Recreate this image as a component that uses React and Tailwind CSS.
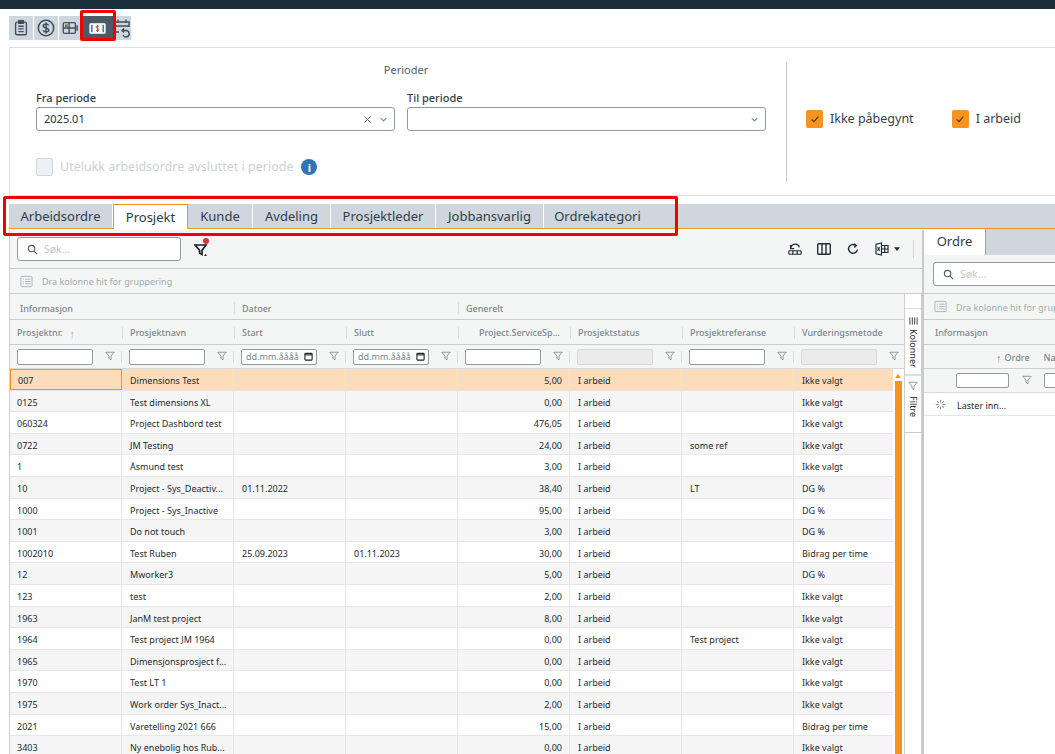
import React from 'react'

const FONT = "font-['Open_Sans','Noto_Sans',sans-serif]"

const rows = [
    ['007', 'Dimensions Test', '', '', '5,00', 'I arbeid', '', 'Ikke valgt'],
    ['0125', 'Test dimensions XL', '', '', '0,00', 'I arbeid', '', 'Ikke valgt'],
    ['060324', 'Project Dashbord test', '', '', '476,05', 'I arbeid', '', 'Ikke valgt'],
    ['0722', 'JM Testing', '', '', '24,00', 'I arbeid', 'some ref', 'Ikke valgt'],
    ['1', 'Åsmund test', '', '', '3,00', 'I arbeid', '', 'Ikke valgt'],
    ['10', 'Project - Sys_Deactiv...', '01.11.2022', '', '38,40', 'I arbeid', 'LT', 'DG %'],
    ['1000', 'Project - Sys_Inactive', '', '', '95,00', 'I arbeid', '', 'DG %'],
    ['1001', 'Do not touch', '', '', '3,00', 'I arbeid', '', 'DG %'],
    ['1002010', 'Test Ruben', '25.09.2023', '01.11.2023', '30,00', 'I arbeid', '', 'Bidrag per time'],
    ['12', 'Mworker3', '', '', '5,00', 'I arbeid', '', 'DG %'],
    ['123', 'test', '', '', '2,00', 'I arbeid', '', 'Ikke valgt'],
    ['1963', 'JanM test project', '', '', '8,00', 'I arbeid', '', 'Ikke valgt'],
    ['1964', 'Test project JM 1964', '', '', '0,00', 'I arbeid', 'Test project', 'Ikke valgt'],
    ['1965', 'Dimensjonsprosject f...', '', '', '0,00', 'I arbeid', '', 'Ikke valgt'],
    ['1970', 'Test LT 1', '', '', '0,00', 'I arbeid', '', 'Ikke valgt'],
    ['1975', 'Work order Sys_Inact...', '', '', '2,00', 'I arbeid', '', 'Ikke valgt'],
    ['2021', 'Varetelling 2021 666', '', '', '15,00', 'I arbeid', '', 'Bidrag per time'],
    ['3403', 'Ny enebolig hos Rub...', '', '', '0,00', 'I arbeid', '', 'Ikke valgt'],
]

const columns = ['Prosjektnr.', 'Prosjektnavn', 'Start', 'Slutt', 'Project.ServiceSp...', 'Prosjektstatus', 'Prosjektreferanse', 'Vurderingsmetode']
const filters = ['text', 'text', 'date', 'date', 'text', 'off', 'text', 'off']
const tabs = ['Arbeidsordre', 'Prosjekt', 'Kunde', 'Avdeling', 'Prosjektleder', 'Jobbansvarlig', 'Ordrekategori']
const tabWidths = ['w-[104px]', 'w-[75px]', 'w-[65px]', 'w-[78px]', 'w-[105px]', 'w-[108px]', 'w-[107px]']

const FunnelIcon = ({ className = 'w-[10px] h-[10px]' }) => (
    <svg viewBox="0 0 12 12" className={className} fill="none" stroke="#7d8a8c" strokeWidth="1">
        <path d="M1 1.5h10L7.2 6v4.5L4.8 9V6z" />
    </svg>
)

const GroupIcon = () => (
    <svg viewBox="0 0 14 14" className="w-[13px] h-[13px] shrink-0" fill="none" stroke="#a9b3b5" strokeWidth="1">
        <rect x="1" y="1.5" width="12" height="11" rx="1" />
        <path d="M3 4.5h1M5.5 4.5h6M3 7h1M5.5 7h6M3 9.5h1M5.5 9.5h6" />
    </svg>
)

const SearchBox = ({ className }) => (
    <div className={`flex items-center gap-[6px] pl-[9px] h-[24px] bg-white border border-[#8e9ba3] rounded-[3px] ${className}`}>
        <svg viewBox="0 0 12 12" className="w-[11px] h-[11px]" fill="none" stroke="#4c5a63" strokeWidth="1.2">
            <circle cx="5" cy="5" r="3.5" />
            <path d="M7.7 7.7L11 11" />
        </svg>
        <span className="text-[10.5px] text-[#c3c9cc] pt-px">Søk...</span>
    </div>
)

const Check = () => (
    <span className="flex items-center justify-center w-[17px] h-[18px] bg-[#f7931e] rounded-[2px]">
        <svg viewBox="0 0 12 12" className="w-[10px] h-[10px]" fill="none" stroke="#4a3320" strokeWidth="1.4">
            <path d="M2 6.5l2.8 2.6L10 3.2" />
        </svg>
    </span>
)

const Chevron = () => (
    <svg viewBox="0 0 10 10" className="w-[9px] h-[9px]" fill="none" stroke="#7f8c94" strokeWidth="1.3">
        <path d="M2 3.5l3 3 3-3" />
    </svg>
)

const TopIcons = () => (
    <div className="flex h-[31px] pl-[9px] items-end">
        <div className="flex items-center justify-center w-[24px] h-[24px] bg-[#cfd6dd] mr-px">
            <svg viewBox="0 0 20 20" className="w-[18px] h-[18px]" fill="none" stroke="#3d4f5c" strokeWidth="1.5">
                <rect x="4" y="3.5" width="12" height="14" rx="1.5" />
                <rect x="7.5" y="1.8" width="5" height="3" fill="#3d4f5c" />
                <path d="M7 8h6M7 11h6M7 14h6" />
            </svg>
        </div>
        <div className="flex items-center justify-center w-[24px] h-[24px] bg-[#cfd6dd] mr-px">
            <svg viewBox="0 0 20 20" className="w-[20px] h-[20px]" fill="none" stroke="#3d4f5c" strokeWidth="1.5">
                <circle cx="10" cy="10" r="7.7" />
                <path d="M12.6 7.4C12.2 6.3 11.2 5.9 10 5.9c-1.5 0-2.7.8-2.7 2 0 2.8 5.4 1.3 5.4 4.2 0 1.2-1.2 2-2.7 2-1.3 0-2.4-.6-2.8-1.8M10 4.4v11.2" />
            </svg>
        </div>
        <div className="flex items-center justify-center w-[21px] h-[24px] bg-[#cfd6dd] mr-[1px]">
            <svg viewBox="0 0 20 20" className="w-[18px] h-[18px]" fill="none" stroke="#3d4f5c" strokeWidth="1.5">
                <rect x="2.5" y="4" width="13.5" height="12" rx="1.5" />
                <path d="M9 4v12M2.5 10H16M18 7v6" />
                <rect x="4.5" y="6" width="3" height="3" fill="#8a6b4a" stroke="none" />
            </svg>
        </div>
        <div className="flex items-center justify-center w-[33px] h-[24px] bg-[#4a5a66]">
            <svg viewBox="0 0 18 12" className="w-[17px] h-[11px]">
                <rect x="0.5" y="0.5" width="17" height="11" rx="1" fill="#f7f8f9" stroke="#dfe4e7" />
                <rect x="2" y="2" width="1.6" height="8" fill="#4f6f96" />
                <rect x="14.4" y="2" width="1.6" height="8" fill="#4f6f96" />
                <path d="M10.6 3.6C9.6 3 7.5 3.2 7.5 4.5c0 1.7 3.1 1.1 3.1 2.8 0 1.2-2.1 1.4-3.1.8M9 2.2v7.6" fill="none" stroke="#c24a3a" strokeWidth="1" />
            </svg>
        </div>
        <div className="flex items-center justify-center w-[17px] h-[24px] bg-[#cfd6dd]">
            <svg viewBox="0 0 17 22" className="w-[17px] h-[22px]" fill="none" stroke="#3d4f5c" strokeWidth="1.4">
                <path d="M1 5h14v5M1 5v10h4M1 9h14M4 2.5v3.5M12 2.5v3.5" />
                <path d="M8 13.5h4a3.2 3.2 0 1 1-3 4.5M10 11.5l-2 2 2 2" />
            </svg>
        </div>
    </div>
)

const FilterPanel = () => (
    <div className="mt-[7px] ml-[9px] h-[149px] border-t border-l border-b border-[#dedede] bg-white flex">
        <div className="w-[776px] shrink-0 pt-[14px] pl-[26px] pr-[10px] flex flex-col">
            <div className="text-center text-[11px] leading-[16px] text-[#57606a]">Perioder</div>
            <div className="flex gap-[12px] mt-[12px]">
                <div className="w-[359px] shrink-0">
                    <div className="text-[11px] leading-[16px] font-medium text-[#33414b] mb-[1px]">Fra periode</div>
                    <div className="h-[24px] bg-white border border-[#8e9ba3] rounded-[3px] flex items-center pl-[7px] pr-[6px]">
                        <span className="flex-1 text-[11px] text-[#2d3940]">2025.01</span>
                        <svg viewBox="0 0 10 10" className="w-[9px] h-[9px] mr-[7px]" fill="none" stroke="#5f6b73" strokeWidth="1">
                            <path d="M1.5 1.5l7 7M8.5 1.5l-7 7" />
                        </svg>
                        <Chevron />
                    </div>
                </div>
                <div className="w-[359px] shrink-0">
                    <div className="text-[11px] leading-[16px] font-medium text-[#33414b] mb-[1px]">Til periode</div>
                    <div className="h-[24px] bg-white border border-[#8e9ba3] rounded-[3px] flex items-center justify-end pr-[6px]">
                        <Chevron />
                    </div>
                </div>
            </div>
            <div className="flex items-center mt-[27px]">
                <span className="w-[17px] h-[18px] bg-[#eef1f3] border border-[#cfd6dd] rounded-[2px]" />
                <span className="ml-[7px] text-[12.5px] text-[#ccd1d4]">Utelukk arbeidsordre avsluttet i periode</span>
                <span className="ml-[8px] flex items-center justify-center w-[16px] h-[16px] rounded-full bg-[#2f75b5] text-white text-[11px] font-bold leading-none">i</span>
            </div>
        </div>
        <div className="w-px h-[120px] mt-[14px] bg-[#c9c9c9]" />
        <div className="flex items-start pt-[62px] pl-[19px]">
            <Check />
            <span className="ml-[7px] text-[12.5px] leading-[18px] text-[#33414b]">Ikke påbegynt</span>
            <span className="ml-[38px]"><Check /></span>
            <span className="ml-[7px] text-[12.5px] leading-[18px] text-[#33414b]">I arbeid</span>
        </div>
    </div>
)

const TabStrip = () => (
    <div className="mt-[8px] ml-[9px] h-[25px] bg-[#cfd6dd] border-b border-[#f7931e] flex">
        {tabs.map((t, i) => (
            <div
                key={t}
                className={`${tabWidths[i]} shrink-0 flex items-center justify-center pt-px text-[13px] ${i === 1
                    ? 'bg-white border-t border-l border-r border-[#f7931e] text-[#2d3940] h-[25px]'
                    : `text-[#2f3e48] ${i < 6 ? 'border-r border-white' : ''}`}`}
            >
                {t}
            </div>
        ))}
    </div>
)

const ColFilter = ({ type }) => {
    let box
    if (type === 'date') {
        box = (
            <div className="w-[76px] h-[16px] shrink-0 bg-white border border-[#8e9ba3] rounded-[2px] flex items-center pl-[4px] pr-[3px] justify-between">
                <span className="text-[9px] text-[#7a858b]">dd.mm.åååå</span>
                <svg viewBox="0 0 10 10" className="w-[9px] h-[9px]" fill="none" stroke="#222" strokeWidth="1.2">
                    <rect x="1" y="1.5" width="8" height="7.5" rx="0.8" />
                    <path d="M1 3.2h8" />
                </svg>
            </div>
        )
    } else if (type === 'off') {
        box = <div className="w-[76px] h-[16px] shrink-0 bg-[#ebebeb] border border-[#d5d9db] rounded-[2px]" />
    } else {
        box = <div className="w-[76px] h-[16px] shrink-0 bg-white border border-[#8e9ba3] rounded-[2px]" />
    }
    return (
        <div className="w-[112px] shrink-0 h-full flex items-center pl-[7px]">
            {box}
            <span className="ml-[12px] -mt-[2px]"><FunnelIcon /></span>
            <span className="ml-auto w-px h-[12px] bg-[#dcdfe0]" />
        </div>
    )
}

const MainGrid = () => (
    <div className="w-[915px] shrink-0 mt-px border-l border-r-2 border-l-[#cfcfcf] border-r-[#c9c9c9] bg-[#f4f6f6] flex flex-col">
        {/* toolbar */}
        <div className="h-[39px] shrink-0 border-b border-[#c9cfd1] flex items-center pl-[7px]">
            <SearchBox className="w-[164px]" />
            <div className="relative ml-[13px] mt-[1px]">
                <svg viewBox="0 0 14 14" className="w-[14px] h-[14px]">
                    <path d="M1 2h11L8 7.2v4.3L5.6 10V7.2z" fill="none" stroke="#16222b" strokeWidth="1.7" />
                    <path d="M10 13l1.5-2 1.5 2z" fill="#16222b" />
                </svg>
                <span className="absolute -top-[5px] left-[9px] w-[6px] h-[6px] rounded-full bg-[#d9363e]" />
            </div>
            <div className="ml-auto flex items-center mr-[8px]">
                <svg viewBox="0 0 16 14" className="w-[14px] h-[14px]" fill="none" stroke="#1f2d38" strokeWidth="1.4">
                    <path d="M3 6.5C3.5 3.5 6 1.5 8.5 1.5c2.5 0 4 1.5 4.5 3.5M3 2v4.5h4" />
                    <rect x="1" y="9" width="14" height="4" rx="0.8" />
                    <path d="M5.5 9v4M10.5 9v4" />
                </svg>
                <svg viewBox="0 0 14 12" className="w-[14px] h-[12px] ml-[15px]" fill="none" stroke="#1f2d38" strokeWidth="1.4">
                    <rect x="0.7" y="0.7" width="12.6" height="10.6" rx="1" />
                    <path d="M5 .7v10.6M9 .7v10.6" />
                </svg>
                <svg viewBox="0 0 12 12" className="w-[12px] h-[12px] ml-[16px]" fill="none" stroke="#1f2d38" strokeWidth="1.4">
                    <path d="M10.3 6.5A4.4 4.4 0 1 1 8.6 2.4" />
                    <path d="M7.2 .8l2 1.7-2 1.9" />
                </svg>
                <svg viewBox="0 0 14 14" className="w-[14px] h-[14px] ml-[16px]" fill="none" stroke="#1f2d38" strokeWidth="1.2">
                    <path d="M6.5 1L1 2.2v9.6L6.5 13z" />
                    <path d="M6.5 3.5H13v7H6.5M9.7 3.5v7M6.5 7H13" />
                    <path d="M2.6 5.2l2 3.6M4.6 5.2l-2 3.6" />
                </svg>
                <svg viewBox="0 0 8 5" className="w-[6px] h-[4px] ml-[5px]"><path d="M0 0h8L4 5z" fill="#1f2d38" /></svg>
                <span className="ml-[13px] w-px h-[18px] bg-[#d4d8da]" />
            </div>
        </div>
        {/* group row */}
        <div className="h-[25px] shrink-0 border-b border-[#c9cfd1] flex items-center pl-[10px] text-[9px] text-[#a2abae]">
            <GroupIcon />
            <span className="ml-[9px] pt-[2px]">Dra kolonne hit for gruppering</span>
        </div>
        <div className="flex flex-1 min-h-0">
            <div className="w-[894px] shrink-0 overflow-hidden flex flex-col">
                {/* band header */}
                <div className="h-[26px] shrink-0 border-b border-[#c9cfd1] flex items-center text-[9px] font-medium text-[#7b8589]">
                    <div className="w-[224px] pl-[10px] pt-[4px]">Informasjon</div>
                    <div className="w-[224px] pl-[7px] mt-[3px] pt-px border-l border-[#dcdfe0] h-[12px] flex items-center">Datoer</div>
                    <div className="pl-[7px] mt-[3px] pt-px border-l border-[#dcdfe0] h-[12px] flex items-center">Generelt</div>
                </div>
                {/* column header */}
                <div className="h-[25px] shrink-0 border-b border-[#c9cfd1] flex items-center text-[9px] font-medium text-[#7b8589]">
                    {columns.map((c, i) => (
                        <div
                            key={c}
                            className={`w-[112px] shrink-0 h-[12px] mt-[2px] flex items-center pl-[7px] ${i > 0 ? 'border-l border-[#dcdfe0]' : ''} ${i === 4 ? 'justify-end pr-[10px]' : ''}`}
                        >
                            {c}
                            {i === 0 && <span className="ml-[7px] text-[#a2abae] text-[11px] leading-none">↑</span>}
                        </div>
                    ))}
                </div>
                {/* filter row */}
                <div className="h-[24px] shrink-0 border-b border-[#d5d9db] flex items-center">
                    {filters.map((f, i) => <ColFilter key={i} type={f} />)}
                </div>
                {/* rows */}
                <div className="flex-1 min-h-0 flex">
                    <div className="w-[883px] shrink-0 overflow-hidden">
                        {rows.map((r, ri) => (
                            <div
                                key={r[0]}
                                className={`flex h-[21.6px] text-[9px] text-[#222b30] border-b border-[#e6e6e6] ${ri === 0 ? 'bg-[#fddcbc]' : ri % 2 === 0 ? 'bg-white' : 'bg-[#f5f5f5]'}`}
                            >
                                {r.map((v, ci) => (
                                    <div
                                        key={ci}
                                        className={`w-[112px] shrink-0 flex items-center pt-[3px] whitespace-nowrap overflow-hidden border-r border-[#e6e6e6] ${ci === 0 ? 'pl-[7px]' : 'pl-[8px]'} pr-[7px] ${ci === 4 ? 'justify-end' : ''} ${ri === 0 && ci === 0 ? 'border border-[#f7931e] pl-[6px]' : ''}`}
                                    >
                                        {v}
                                    </div>
                                ))}
                            </div>
                        ))}
                    </div>
                    {/* scrollbar */}
                    <div className="w-[11px] shrink-0 bg-white flex flex-col items-center pr-px">
                        <svg viewBox="0 0 6 4" className="w-[6px] h-[4px] mt-[5px]"><path d="M0 4h6L3 0z" fill="#f7931e" /></svg>
                        <div className="mt-[3px] w-[7px] flex-1 bg-[#f7931e]" />
                    </div>
                </div>
            </div>
            {/* side buttons */}
            <div className="w-[18px] shrink-0 bg-white border-l border-r border-[#cfcfcf] flex flex-col">
                <div className="h-[15px] shrink-0 border-b border-[#dcdfe0]" />
                <div className="h-[67px] shrink-0 border-b-2 border-[#dcdfe0] flex flex-col items-center pt-[8px]">
                    <svg viewBox="0 0 10 8" className="w-[9px] h-[8px]" fill="none" stroke="#333" strokeWidth="1"><path d="M1 0v8M3.7 0v8M6.3 0v8M9 0v8" /></svg>
                    <span className="mt-[4px] text-[9px] leading-[12px] text-[#222b30] [writing-mode:vertical-rl]">Kolonner</span>
                </div>
                <div className="h-[57px] shrink-0 border-b border-[#c9cfd1] flex flex-col items-center pt-[5px]">
                    <FunnelIcon className="w-[10px] h-[10px]" />
                    <span className="mt-[5px] text-[9px] leading-[12px] text-[#222b30] [writing-mode:vertical-rl]">Filtre</span>
                </div>
            </div>
        </div>
    </div>
)

const OrderPanel = () => (
    <div className="flex-1 min-w-0 flex flex-col bg-[#f4f6f6] overflow-hidden">
        <div className="h-[26px] shrink-0 bg-[#cfd6dd] flex border-b border-[#d5d9db]">
            <div className="w-[62px] h-[26px] bg-white border-r border-[#f7931e] flex items-center justify-center text-[13px] text-[#2f3e48]">Ordre</div>
        </div>
        <div className="h-[39px] shrink-0 border-b border-[#c9cfd1] flex items-center pl-[9px]">
            <SearchBox className="w-[200px] shrink-0" />
        </div>
        <div className="h-[26px] shrink-0 border-b border-[#c9cfd1] flex items-center pl-[10px] text-[9px] text-[#a2abae] whitespace-nowrap">
            <GroupIcon />
            <span className="ml-[9px] pt-[2px]">Dra kolonne hit for gruppering</span>
        </div>
        <div className="h-[25px] shrink-0 border-b border-[#c9cfd1] flex items-center pl-[11px] pt-[2px] text-[9px] font-medium text-[#7b8589]">Informasjon</div>
        <div className="h-[24px] shrink-0 border-b border-[#c9cfd1] flex items-center pt-[2px] text-[9px] font-medium text-[#7b8589] whitespace-nowrap">
            <span className="ml-[72px] text-[11px] leading-none mr-[3px]">↑</span>
            <span>Ordre</span>
            <span className="ml-[14px]">Na</span>
        </div>
        <div className="h-[24px] shrink-0 border-b border-[#d5d9db] flex items-center">
            <span className="ml-[32px] w-[53px] h-[15px] shrink-0 bg-white border border-[#8e9ba3] rounded-[2px]" />
            <span className="ml-[13px] -mt-[2px]"><FunnelIcon /></span>
            <span className="ml-[12px] w-[53px] h-[15px] shrink-0 bg-white border border-[#8e9ba3] rounded-[2px]" />
        </div>
        <div className="h-[23px] shrink-0 bg-white border-b border-[#e6e6e6] flex items-center pl-[11px] text-[9px] text-[#222b30]">
            <svg viewBox="0 0 12 12" className="w-[11px] h-[11px]" fill="none" stroke="#8b9296" strokeWidth="1.2">
                <path d="M6 .8v3M6 8.2v3M.8 6h3M8.2 6h3M2.3 2.3l2.1 2.1M7.6 7.6l2.1 2.1M2.3 9.7l2.1-2.1M7.6 4.4l2.1-2.1" />
            </svg>
            <span className="ml-[11px] pt-[3px]">Laster inn...</span>
        </div>
        <div className="flex-1 bg-white" />
    </div>
)

export default function App() {
    return (
        <div className={`relative w-[1055px] h-[754px] overflow-hidden bg-white flex flex-col ${FONT}`}>
            <div className="h-[9px] shrink-0 bg-[#1a2e3b]" />
            <TopIcons />
            <FilterPanel />
            <TabStrip />
            <div className="flex flex-1 min-h-0 ml-[9px]">
                <MainGrid />
                <OrderPanel />
            </div>

            {/* red annotation frames */}
            <div className="absolute left-[80px] top-[10px] w-[36px] h-[31px] border-[3px] border-[#f00000] rounded-[2px] pointer-events-none" />
            <div className="absolute left-[3px] top-[196px] w-[675px] h-[40px] border-[3px] border-[#f00000] rounded-[2px] pointer-events-none" />
        </div>
    )
}
